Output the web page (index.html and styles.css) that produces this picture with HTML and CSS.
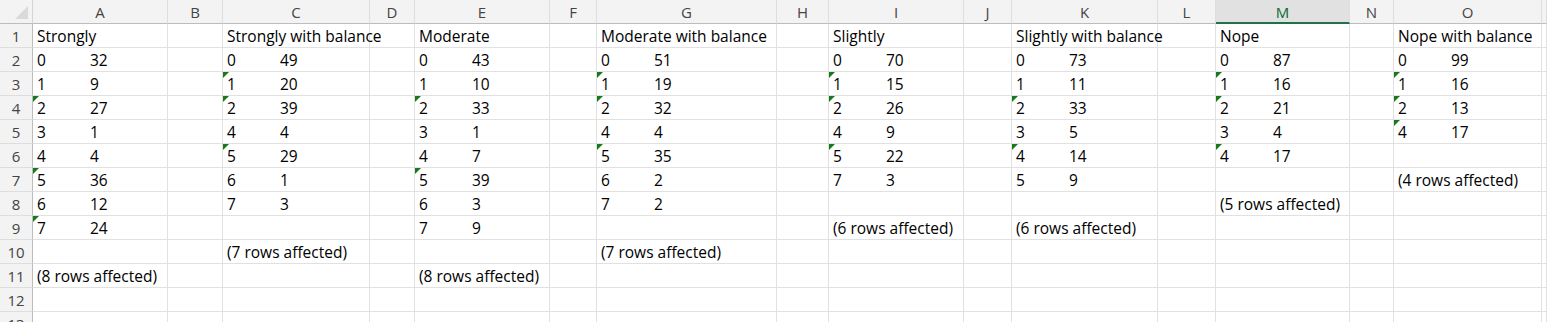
FILE: index.html
```html
<!DOCTYPE html>
<html lang="en">
<head>
  <meta charset="UTF-8" />
  <title>Book1 - Excel</title>
  <link rel="stylesheet" href="styles.css">
</head>
<body>
  <div id="sheet" class="sheet"></div>

  <script>
    const letters = ['A','B','C','D','E','F','G','H','I','J','K','L','M','N','O',''];
    const selectedCol = 'M';

    // each block: column, title, rows of [key, value, textFlag], row where the footer goes
    const blocks = {
      A: { title: 'Strongly', rows: [[0,32],[1,9],[2,27,1],[3,1],[4,4],[5,36,1],[6,12],[7,24,1]], footRow: 11, foot: '(8 rows affected)' },
      C: { title: 'Strongly with balance', rows: [[0,49],[1,20,1],[2,39,1],[4,4],[5,29,1],[6,1],[7,3]], footRow: 10, foot: '(7 rows affected)' },
      E: { title: 'Moderate', rows: [[0,43],[1,10],[2,33,1],[3,1],[4,7],[5,39,1],[6,3],[7,9]], footRow: 11, foot: '(8 rows affected)' },
      G: { title: 'Moderate with balance', rows: [[0,51],[1,19,1],[2,32,1],[4,4],[5,35,1],[6,2],[7,2]], footRow: 10, foot: '(7 rows affected)' },
      I: { title: 'Slightly', rows: [[0,70],[1,15,1],[2,26,1],[4,9],[5,22,1],[7,3]], footRow: 9, foot: '(6 rows affected)' },
      K: { title: 'Slightly with balance', rows: [[0,73],[1,11],[2,33,1],[3,5],[4,14,1],[5,9]], footRow: 9, foot: '(6 rows affected)' },
      M: { title: 'Nope', rows: [[0,87],[1,16,1],[2,21,1],[3,4],[4,17,1]], footRow: 8, foot: '(5 rows affected)' },
      O: { title: 'Nope with balance', rows: [[0,99],[1,16,1],[2,13,1],[4,17,1]], footRow: 7, foot: '(4 rows affected)' }
    };

    const sheet = document.getElementById('sheet');

    function cell(cls, html) {
      const div = document.createElement('div');
      div.className = cls;
      if (html) div.innerHTML = html;
      sheet.appendChild(div);
      return div;
    }

    // column headers
    cell('corner');
    letters.forEach(l => {
      cell('col-head' + (l === selectedCol ? ' selected' : ''), l);
    });

    for (let r = 1; r <= 13; r++) {
      cell('row-head', r);
      letters.forEach(l => {
        const b = blocks[l];
        let html = '';
        let cls = 'cell';
        if (b) {
          if (r === 1) {
            html = b.title;
          } else if (r - 2 < b.rows.length) {
            const row = b.rows[r - 2];
            html = `<span class="key">${row[0]}</span>${row[1]}`;
            if (row[2]) cls += ' flag';
          } else if (r === b.footRow) {
            html = b.foot;
          }
        }
        cell(cls, html);
      });
    }
  </script>
</body>
</html>
```

FILE: styles.css
```css
body {
  margin: 0;
  padding: 0;
  background: white;
  font-family: "Open Sans", "Noto Sans", sans-serif;
  font-size: 15.5px;
  color: #000;
  overflow: hidden;
}
.sheet {
  display: grid;
  grid-template-columns: 33px 135px 55px 147px 45px 135px 47px 180px 52px 135px 48px 146px 58px 134px 44px 148px 1fr;
  grid-auto-rows: 24px;
  width: 1547px;
}
.corner, .col-head, .row-head {
  background: #f3f3f3;
  color: #444;
  box-sizing: border-box;
  font-size: 15px;
}
.corner {
  position: relative;
  border-right: 1px solid #d4d4d4;
  border-bottom: 1px solid #bdbdbd;
}
.corner::after {
  content: "";
  position: absolute;
  right: 4px;
  bottom: 4px;
  width: 0;
  height: 0;
  border-left: 13px solid transparent;
  border-bottom: 13px solid #dadada;
}
.col-head {
  text-align: center;
  line-height: 24px;
  border-right: 1px solid #dedede;
  border-bottom: 1px solid #bdbdbd;
}
.col-head.selected {
  background: #e1e1e1;
  color: #0e6a34;
  border-bottom: 2px solid #1f7244;
}
.row-head {
  text-align: center;
  line-height: 24px;
  border-right: 1px solid #bdbdbd;
  border-bottom: 1px solid #dedede;
}
.cell {
  position: relative;
  box-sizing: border-box;
  border-right: 1px solid #e1e1e1;
  border-bottom: 1px solid #e1e1e1;
  padding: 0 0 0 4px;
  line-height: 24px;
  white-space: nowrap;
  overflow: visible;
  z-index: 1;
}
.key {
  display: inline-block;
  width: 53px;
}
.flag::before {
  content: "";
  position: absolute;
  left: 0;
  top: 0;
  width: 0;
  height: 0;
  border-top: 6px solid #18781c;
  border-right: 6px solid transparent;
}
```
